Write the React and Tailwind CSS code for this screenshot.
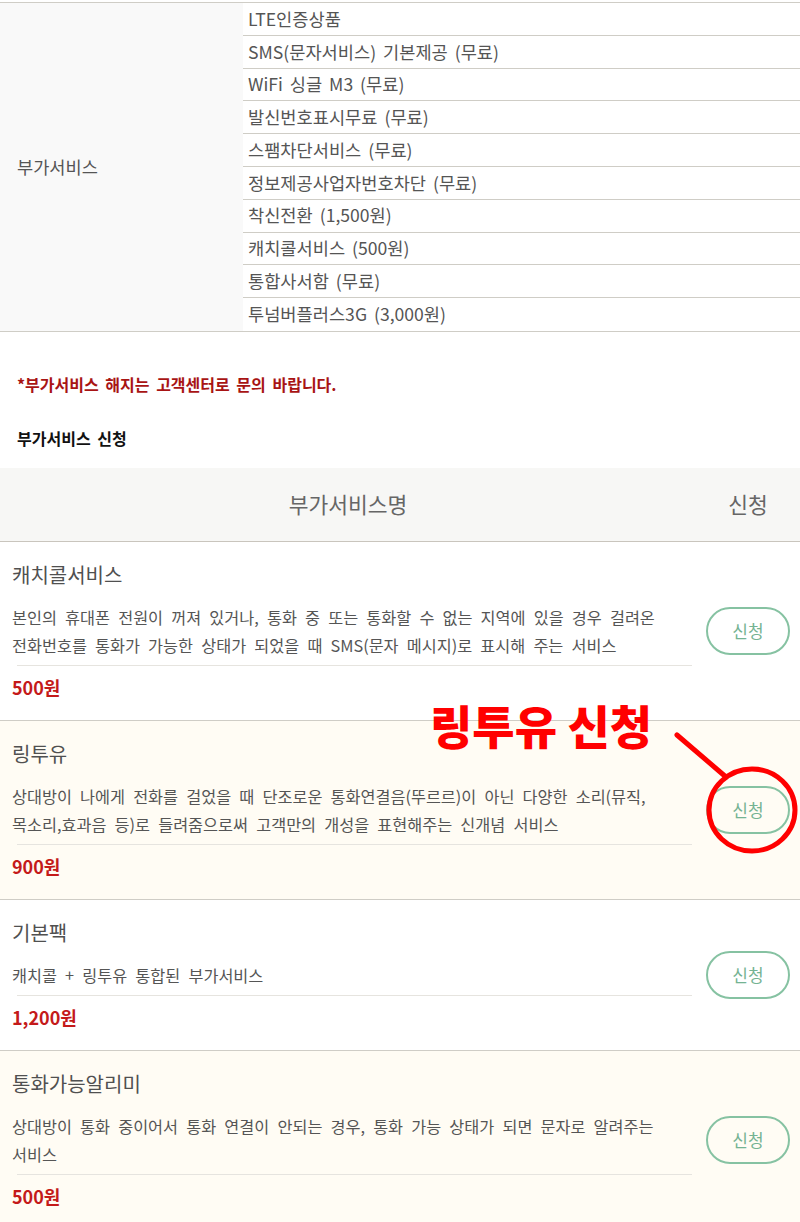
const font = { fontFamily: '"Noto Sans CJK KR", "Noto Sans", sans-serif' };

const extras = [
  "LTE인증상품",
  "SMS(문자서비스) 기본제공 (무료)",
  "WiFi 싱글 M3 (무료)",
  "발신번호표시무료 (무료)",
  "스팸차단서비스 (무료)",
  "정보제공사업자번호차단 (무료)",
  "착신전환 (1,500원)",
  "캐치콜서비스 (500원)",
  "통합사서함 (무료)",
  "투넘버플러스3G (3,000원)",
];

const services = [
  {
    name: "캐치콜서비스",
    desc: "본인의 휴대폰 전원이 꺼져 있거나, 통화 중 또는 통화할 수 없는 지역에 있을 경우 걸려온 전화번호를 통화가 가능한 상태가 되었을 때 SMS(문자 메시지)로 표시해 주는 서비스",
    price: "500원",
    bg: "bg-white",
  },
  {
    name: "링투유",
    desc: "상대방이 나에게 전화를 걸었을 때 단조로운 통화연결음(뚜르르)이 아닌 다양한 소리(뮤직, 목소리,효과음 등)로 들려줌으로써 고객만의 개성을 표현해주는 신개념 서비스",
    price: "900원",
    bg: "bg-[#fffcf4]",
  },
  {
    name: "기본팩",
    desc: "캐치콜 + 링투유 통합된 부가서비스",
    price: "1,200원",
    bg: "bg-white",
  },
  {
    name: "통화가능알리미",
    desc: "상대방이 통화 중이어서 통화 연결이 안되는 경우, 통화 가능 상태가 되면 문자로 알려주는 서비스",
    price: "500원",
    bg: "bg-[#fffcf4]",
  },
];

function ServiceRow({ item }) {
  return (
    <div className={`flex border-b border-[#cfcdc6] ${item.bg}`}>
      <div className="w-[696px] pl-3 pr-1 pt-[18px] pb-[21px]">
        <div className="text-[20px] leading-[30px] text-[#505050]">{item.name}</div>
        <div className="mt-[13px] border-b border-[#e6e4df] pb-[6px] ml-[5px]">
          <p className="-ml-[5px] text-[16.3px] leading-[28px] text-[#555] break-keep [word-spacing:4.5px]">
            {item.desc}
          </p>
        </div>
        <div className="mt-[9px] text-[18px] leading-[24px] font-bold text-[#c41a1a]">
          {item.price}
        </div>
      </div>
      <div className="flex-1 flex items-center justify-center">
        <button className="w-[84px] h-[48px] rounded-full border-2 border-[#86c2a2] text-[17px] text-[#74b392]">
          신청
        </button>
      </div>
    </div>
  );
}

export default function App() {
  return (
    <div className="relative w-[800px] bg-white" style={font}>
      <div className="pt-[2px]">
        <div className="flex border-y border-[#cfcdc6]">
          <div className="w-[243px] bg-[#f9f9f9] flex items-center pl-[17px] text-[17.6px] text-[#555]">
            부가서비스
          </div>
          <div className="flex-1">
            {extras.map((t, i) => (
              <div
                key={t}
                className={`h-[32.8px] flex items-center pl-[5px] text-[17.6px] text-[#555] [word-spacing:3px] ${
                  i < extras.length - 1 ? "border-b border-[#cfcdc6]" : ""
                }`}
              >
                {t}
              </div>
            ))}
          </div>
        </div>
      </div>

      <div className="px-[17px] pt-[40px]">
        <p className="text-[16px] leading-[24px] font-bold text-[#a81414] [word-spacing:3px]">
          *부가서비스 해지는 고객센터로 문의 바랍니다.
        </p>
        <p className="mt-[30px] text-[16px] leading-[24px] font-bold text-[#111] [word-spacing:3px]">
          부가서비스 신청
        </p>
      </div>

      <div className="mt-[18px] flex h-[74px] bg-[#f7f7f5] border-b border-[#c9c5bd] text-[21.5px] text-[#666]">
        <div className="w-[696px] flex items-center justify-center">부가서비스명</div>
        <div className="flex-1 flex items-center justify-center">신청</div>
      </div>

      {services.map((s) => (
        <ServiceRow key={s.name} item={s} />
      ))}

      <div className="absolute left-[430px] top-[698px] text-[46px] leading-[52px] font-black text-[#ff0000]">
        링투유 신청
      </div>
      <svg
        className="absolute left-0 top-0 pointer-events-none"
        width="800"
        height="1222"
        viewBox="0 0 800 1222"
      >
        <line x1="677" y1="735" x2="726" y2="777" stroke="#ff0000" strokeWidth="5" strokeLinecap="round" />
        <ellipse cx="752" cy="810" rx="43" ry="41" fill="none" stroke="#ff0000" strokeWidth="5" />
      </svg>
    </div>
  );
}
